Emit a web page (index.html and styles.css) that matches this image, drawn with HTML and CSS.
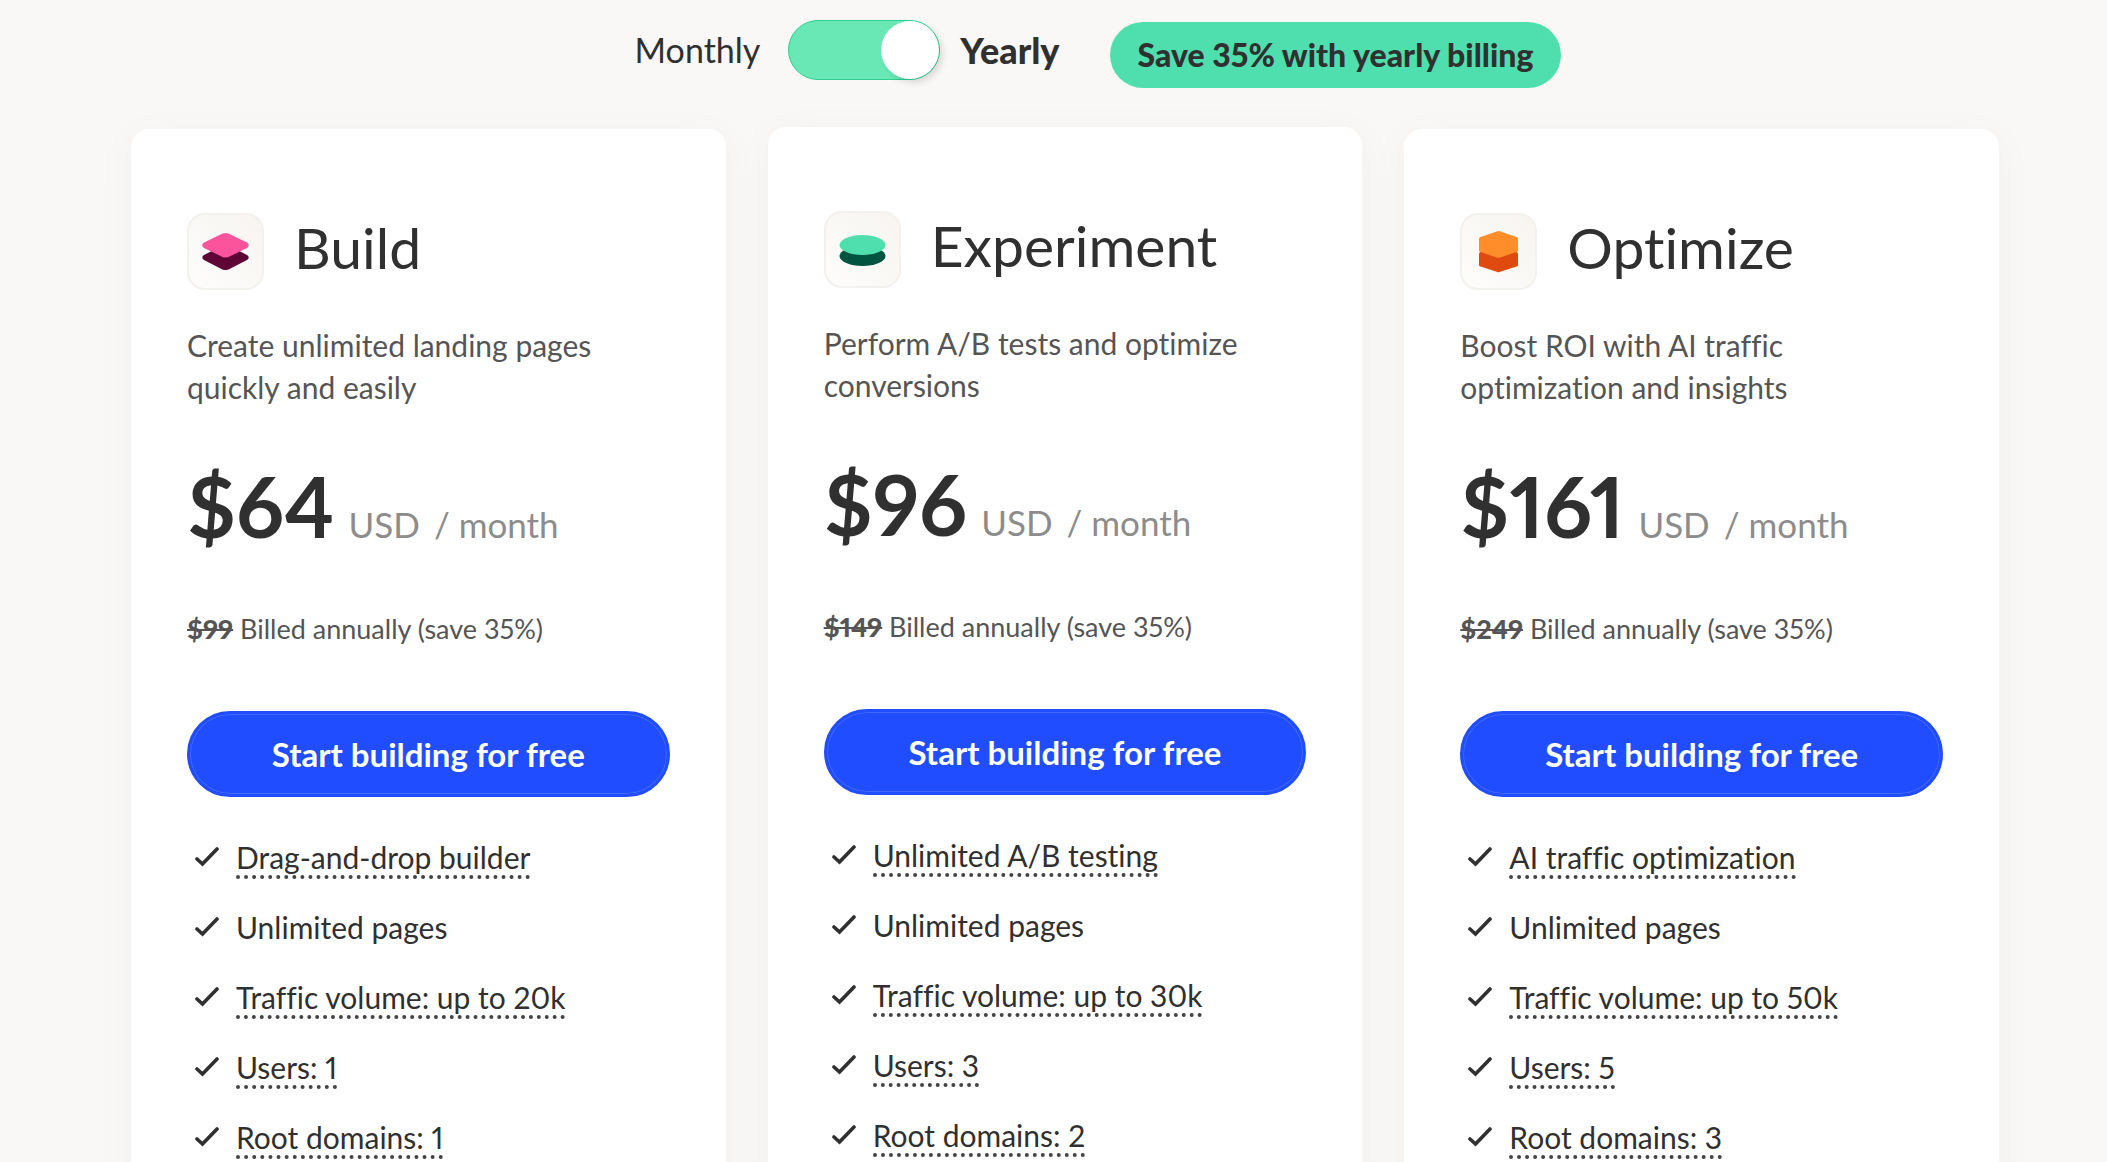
FILE: index.html
```html
<!DOCTYPE html>
<html lang="en">
<head>
<meta charset="utf-8">
<meta name="viewport" content="width=device-width, initial-scale=1">
<title>Pricing plans</title>
<link rel="stylesheet" href="styles.css">
</head>
<body>
<svg class="sprite" aria-hidden="true">
  <symbol id="check" viewBox="0 0 24 20"><path d="M2 12 7.500 17 22 2" fill="none" stroke="currentColor" stroke-width="3.600" stroke-linecap="round"/></symbol>
</svg>
<main class="pricing">
  <div class="billing">
    <label class="period" for="billing">Monthly</label>
    <input class="switch" id="billing" type="checkbox" role="switch" checked>
    <label class="period period-active" for="billing">Yearly</label>
    <span class="badge">Save 35% with yearly billing</span>
  </div>
  <div class="plans">
    <section class="plan">
      <div class="plan-head">
        <span class="plan-icon"><svg viewBox="0 0 77 77" aria-hidden="true"><path fill="#5f0536" d="M17 42Q13.500 44.500 17 47L33.500 55.500Q38.500 58.500 43.500 55.500L60 47Q63.500 44.500 60 42L43.500 33.500Q38.500 30.500 33.500 33.500Z"/><path fill="#fb539c" d="M17 29.500Q13.500 32 17 35L33.500 43Q38.500 46 43.500 43L60 35Q63.500 32 60 29.500L43.500 21.500Q38.500 18.500 33.500 21.500Z"/></svg></span>
        <h2 class="plan-name">Build</h2>
      </div>
      <p class="plan-text">Create unlimited landing pages quickly and easily</p>
      <p class="price"><strong class="amount">$64</strong><span class="unit">USD</span><span class="unit">/ month</span></p>
      <p class="billed"><s class="old">$99</s> Billed annually (save 35%)</p>
      <button class="cta" type="button">Start building for free</button>
      <ul class="features">
        <li class="feature"><svg class="check" aria-hidden="true"><use href="#check"/></svg><span class="hint">Drag-and-drop builder</span></li>
        <li class="feature"><svg class="check" aria-hidden="true"><use href="#check"/></svg><span>Unlimited pages</span></li>
        <li class="feature"><svg class="check" aria-hidden="true"><use href="#check"/></svg><span class="hint">Traffic volume: up to 20k</span></li>
        <li class="feature"><svg class="check" aria-hidden="true"><use href="#check"/></svg><span class="hint">Users: 1</span></li>
        <li class="feature"><svg class="check" aria-hidden="true"><use href="#check"/></svg><span class="hint">Root domains: 1</span></li>
      </ul>
    </section>
    <section class="plan plan-raised">
      <div class="plan-head">
        <span class="plan-icon"><svg viewBox="0 0 77 77" aria-hidden="true"><ellipse cx="38.500" cy="45" rx="23" ry="10" fill="#005440"/><ellipse cx="38.500" cy="34" rx="23" ry="10" fill="#4fdfaf"/></svg></span>
        <h2 class="plan-name">Experiment</h2>
      </div>
      <p class="plan-text">Perform A/B tests and optimize conversions</p>
      <p class="price"><strong class="amount">$96</strong><span class="unit">USD</span><span class="unit">/ month</span></p>
      <p class="billed"><s class="old">$149</s> Billed annually (save 35%)</p>
      <button class="cta" type="button">Start building for free</button>
      <ul class="features">
        <li class="feature"><svg class="check" aria-hidden="true"><use href="#check"/></svg><span class="hint">Unlimited A/B testing</span></li>
        <li class="feature"><svg class="check" aria-hidden="true"><use href="#check"/></svg><span>Unlimited pages</span></li>
        <li class="feature"><svg class="check" aria-hidden="true"><use href="#check"/></svg><span class="hint">Traffic volume: up to 30k</span></li>
        <li class="feature"><svg class="check" aria-hidden="true"><use href="#check"/></svg><span class="hint">Users: 3</span></li>
        <li class="feature"><svg class="check" aria-hidden="true"><use href="#check"/></svg><span class="hint">Root domains: 2</span></li>
      </ul>
    </section>
    <section class="plan">
      <div class="plan-head">
        <span class="plan-icon"><svg viewBox="0 0 77 77" aria-hidden="true"><path fill="#df4a0e" d="M19 41Q19 39.500 20.500 39H56.500Q58 39.500 58 41V52Q58 53 56.500 53.500L39.500 59Q38.500 59.500 37.500 59L20.500 53.500Q19 53 19 52Z"/><path fill="#ff8d29" d="M19 26Q19 24.500 20.500 24L37.500 18.200Q38.500 17.800 39.500 18.200L56.500 24Q58 24.500 58 26V37.500Q58 38.500 56.500 39L39.500 44.700Q38.500 45 37.500 44.700L20.500 39Q19 38.500 19 37.500Z"/></svg></span>
        <h2 class="plan-name">Optimize</h2>
      </div>
      <p class="plan-text">Boost ROI with AI traffic optimization and insights</p>
      <p class="price"><strong class="amount">$161</strong><span class="unit">USD</span><span class="unit">/ month</span></p>
      <p class="billed"><s class="old">$249</s> Billed annually (save 35%)</p>
      <button class="cta" type="button">Start building for free</button>
      <ul class="features">
        <li class="feature"><svg class="check" aria-hidden="true"><use href="#check"/></svg><span class="hint">AI traffic optimization</span></li>
        <li class="feature"><svg class="check" aria-hidden="true"><use href="#check"/></svg><span>Unlimited pages</span></li>
        <li class="feature"><svg class="check" aria-hidden="true"><use href="#check"/></svg><span class="hint">Traffic volume: up to 50k</span></li>
        <li class="feature"><svg class="check" aria-hidden="true"><use href="#check"/></svg><span class="hint">Users: 5</span></li>
        <li class="feature"><svg class="check" aria-hidden="true"><use href="#check"/></svg><span class="hint">Root domains: 3</span></li>
      </ul>
    </section>
  </div>
</main>
</body>
</html>
```
FILE: styles.css
```css
* { box-sizing: border-box; }

html { scrollbar-width: none; }

body {
  margin: 0;
  background: #f9f8f6;
  color: #303030;
  font-family: Lato, "Open Sans", sans-serif;
  font-size: 30px;
  font-variant-ligatures: none;
  font-variant-numeric: proportional-nums;
  line-height: 42px;
}

h2, p, ul { margin: 0; padding: 0; }

.sprite { display: none; }

.pricing { padding: 20px 108px 0 131px; }

.billing {
  display: flex;
  align-items: center;
  justify-content: center;
  height: 68px;
  margin-bottom: 39px;
  padding-left: 66px;
}

.period { margin-bottom: 8px; font-size: 34px; line-height: 48px; }
.period-active { font-size: 36px; font-weight: 900; }

.switch {
  appearance: none;
  display: flex;
  justify-content: flex-end;
  width: 152px;
  height: 60px;
  margin: 0 20px 8px 28px;
  border: 1px solid #2fcf94;
  border-radius: 30px;
  background: #69e8b5;
}

.switch::before {
  content: "";
  width: 58px;
  height: 58px;
  border-radius: 50%;
  background: #fff;
  box-shadow: 4px 4px 6px rgb(0 0 0 / 12%);
}

.badge {
  margin: 2px 0 0 50px;
  padding: 0 28px;
  border-radius: 33px;
  background: #4fdfaf;
  font-size: 32px;
  font-weight: 900;
  line-height: 66px;
}

.plans {
  display: grid;
  grid-template-columns: repeat(3, 1fr);
  gap: 42px;
}

.plan {
  margin-top: 2px;
  padding: 84px 56px 56px;
  border-radius: 18px;
  background: #fff;
  box-shadow: 0 8px 40px rgb(0 0 0 / 4%);
}

.plan-raised { margin-top: 0; }

.plan-head { display: flex; align-items: center; gap: 30px; }

.plan-icon {
  width: 77px;
  height: 77px;
  border: 2px solid #f3f1ee;
  border-radius: 18px;
  background: linear-gradient(45deg, #fdfdfc, #f7f4f0);
}

.plan-icon svg { display: block; margin: -2px; width: 77px; height: 77px; }

.plan-name {
  padding-bottom: 10px;
  font-size: 57px;
  font-weight: 400;
  line-height: 66px;
}

.plan-text {
  max-width: 440px;
  margin-top: 34px;
  color: #555;
}

.price {
  display: flex;
  align-items: baseline;
  gap: 14px;
  margin-top: 38px;
  line-height: 120px;
}

.amount { font-size: 84px; font-weight: 700; }
.unit { color: #8c8c8c; font-size: 35px; }

.billed {
  margin-top: 24px;
  color: #555;
  font-size: 27px;
}

.old { font-weight: 900; }

.cta {
  width: 100%;
  height: 86px;
  margin-top: 61px;
  border: 3px solid #204dff;
  border-radius: 43px;
  background: #204dff;
  box-shadow: inset 0 0 0 1px rgb(255 255 255 / 16%);
  color: #fff;
  font: 700 33px/42px Lato, "Open Sans", sans-serif;
}

.features {
  display: grid;
  gap: 28px;
  margin-top: 39px;
  list-style: none;
}

.feature {
  display: flex;
  align-items: center;
  gap: 17px;
  min-height: 42px;
  padding-left: 8px;
}

.check { width: 24px; height: 20px; }

.hint {
  margin-bottom: -4px;
  border-bottom: 4px dotted #444;
  line-height: 36px;
}
```
